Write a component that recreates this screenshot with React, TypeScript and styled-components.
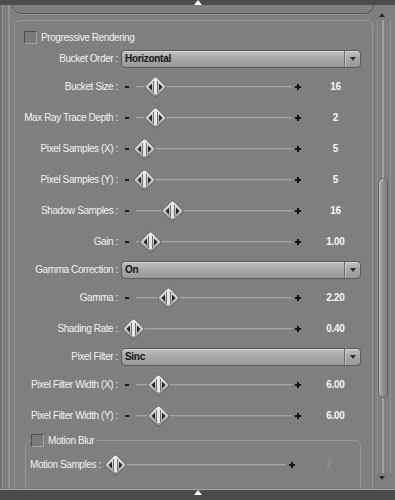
import React from "react";
import styled, { createGlobalStyle } from "styled-components";

const Global = createGlobalStyle`
  html, body { margin: 0; padding: 0; background: #7f7f7f; }
  body { font-family: "Liberation Sans", Arial, sans-serif; }
`;

const Root = styled.div`
  width: 395px;
  height: 500px;
  display: flex;
  flex-direction: column;
  overflow: hidden;
  background: #7f7f7f;
  font-family: "Liberation Sans", Arial, sans-serif;
  font-size: 10px;
  color: #f2f2f2;
`;

const EdgeBar = styled.div<{ $h: number; $top?: boolean }>`
  height: ${(p) => p.$h}px;
  flex-shrink: 0;
  background: #4b4b4b;
  display: flex;
  justify-content: center;
  align-items: flex-start;
  box-sizing: border-box;
  ${(p) => (p.$top ? "" : "border-top: 1px solid #a2a2a2;")}
`;

const UpMark = styled.span`
  width: 0;
  height: 0;
  border-left: 4px solid transparent;
  border-right: 4px solid transparent;
  border-bottom: 5px solid #ffffff;
`;

const Body = styled.div`
  flex: 1;
  min-height: 0;
  display: flex;
`;

const Main = styled.div`
  flex: 1;
  min-width: 0;
  display: flex;
  flex-direction: column;
  overflow: hidden;
  padding: 0 2px 0 14px;
  background: linear-gradient(
    to right,
    #727272 0 2px,
    #949494 2px 3px,
    transparent 3px 8px,
    #929292 8px 10px,
    transparent 10px
  );
`;

const Bracket = styled.div`
  flex-shrink: 0;
  height: 8px;
  margin: 0 -1px 0 -2px;
  border: 1px solid #525252;
  border-top: none;
  border-radius: 0 0 9px 9px;
  box-shadow: 0 1px 0 #959595;
`;

const Panel = styled.div`
  flex: 1;
  margin-top: 6px;
  border: 1px solid #979797;
  border-bottom: none;
  border-radius: 6px 6px 0 0;
  padding: 7px 5px 0 8px;
`;

const CheckRow = styled.label`
  height: 18px;
  display: flex;
  align-items: center;
  gap: 4px;
  padding-left: 1px;
  letter-spacing: -0.4px;
`;

const Box = styled.span`
  width: 13px;
  height: 13px;
  box-sizing: border-box;
  border: 1px solid;
  border-color: #4f4f4f #a3a3a3 #a3a3a3 #4f4f4f;
  background: #7a7a7a;
  flex-shrink: 0;
`;

const Row = styled.div<{ $cols: string; $h: number }>`
  display: grid;
  grid-template-columns: ${(p) => p.$cols};
  align-items: center;
  height: ${(p) => p.$h}px;
`;

const Label = styled.span<{ $left?: boolean }>`
  text-align: ${(p) => (p.$left ? "left" : "right")};
  padding-right: ${(p) => (p.$left ? 0 : 3)}px;
  white-space: nowrap;
  letter-spacing: -0.4px;
`;

const Value = styled.span<{ $off?: boolean }>`
  text-align: center;
  font-weight: bold;
  letter-spacing: -0.3px;
  color: ${(p) => (p.$off ? "#929292" : "#f6f6f6")};
`;

const Slider = styled.div`
  position: relative;
  height: 100%;
  display: flex;
  align-items: center;
`;

const Minus = styled.span`
  width: 4px;
  height: 2px;
  background: #1c1c1c;
  margin: 0 7px 0 4px;
  flex-shrink: 0;
`;

const Track = styled.div`
  flex: 1;
  height: 1px;
  background: #a6a6a6;
  box-shadow: 0 1px 0 #8b8b8b;
`;

const Plus = styled.span`
  position: relative;
  width: 6px;
  height: 6px;
  margin: 0 3px 0 3px;
  flex-shrink: 0;
  &::before,
  &::after {
    content: "";
    position: absolute;
    background: #141414;
  }
  &::before {
    left: 0;
    top: 2px;
    width: 6px;
    height: 2px;
  }
  &::after {
    left: 2px;
    top: 0;
    width: 2px;
    height: 6px;
  }
`;

const ThumbSvg = styled.svg`
  position: absolute;
  top: 50%;
  margin-top: -11px;
  width: 23px;
  height: 22px;
`;

const SelectBox = styled.div`
  height: 18px;
  box-sizing: border-box;
  margin-right: 6px;
  display: flex;
  align-items: stretch;
  border: 1px solid #5a5a5a;
  border-radius: 4px;
  background: linear-gradient(#c2c2c2, #a8a8a8 45%, #999999);
  box-shadow: inset 0 1px 0 #d6d6d6;
`;

const SelectText = styled.span`
  flex: 1;
  display: flex;
  align-items: center;
  padding-left: 3px;
  font-weight: bold;
  color: #151515;
  letter-spacing: -0.3px;
`;

const SelectArrow = styled.span`
  width: 16px;
  box-sizing: border-box;
  border-left: 1px solid #6b6b6b;
  box-shadow: inset 1px 0 0 #c6c6c6;
  display: flex;
  align-items: center;
  justify-content: center;
  &::after {
    content: "";
    width: 0;
    height: 0;
    border-left: 3.5px solid transparent;
    border-right: 3.5px solid transparent;
    border-top: 4px solid #2e2e2e;
  }
`;

const Group = styled.fieldset`
  margin: 0 6px 0 2px;
  padding: 0 0 12px 4px;
  border: 1px solid #989898;
  border-radius: 6px;
  min-width: 0;
`;

const Legend = styled.legend`
  padding: 0 3px 0 1px;
  height: 18px;
  display: flex;
  align-items: center;
  gap: 4px;
  letter-spacing: -0.4px;
`;

const Scroll = styled.div`
  width: 20px;
  flex-shrink: 0;
  display: flex;
  flex-direction: column;
  padding: 8px 0 9px;
  box-sizing: border-box;
`;

const ScrollArrow = styled.span<{ $down?: boolean }>`
  width: 0;
  height: 0;
  margin-left: 4px;
  border-left: 3.5px solid transparent;
  border-right: 3.5px solid transparent;
  ${(p) =>
    p.$down
      ? "border-top: 4px solid #2c2c2c;"
      : "border-bottom: 4px solid #2c2c2c;"}
`;

const ScrollTrack = styled.div`
  flex: 1;
  position: relative;
  margin: 3px 0;
  background: linear-gradient(
    to right,
    transparent 0 2px,
    #8e8e8e 2px 3px,
    transparent 3px 7px,
    #a2a2a2 7px 9px,
    transparent 9px 15px,
    #959595 15px 16px,
    transparent 16px
  );
`;

const ScrollThumb = styled.div`
  position: absolute;
  left: 3px;
  top: 158px;
  width: 10px;
  height: 220px;
  box-sizing: border-box;
  border: 1px solid #5c5c5c;
  border-radius: 5px;
  background: linear-gradient(to right, #a8a8a8, #8d8d8d 60%, #808080);
  box-shadow: inset 1px 1px 0 #bdbdbd;
`;

function Thumb({ left }: { left: number }) {
  return (
    <ThumbSvg viewBox="0 0 23 22" style={{ left }}>
      <defs>
        <linearGradient id="thg" x1="0" y1="0" x2="0" y2="1">
          <stop offset="0" stopColor="#f2f2f2" />
          <stop offset="0.5" stopColor="#c9c9c9" />
          <stop offset="1" stopColor="#8a8a8a" />
        </linearGradient>
      </defs>
      <path
        d="M11.5 1 Q12.5 1 13.5 2 L21.5 10 Q22.5 11 21.5 12 L13.5 20 Q12.5 21 11.5 21 Q10.5 21 9.5 20 L1.5 12 Q0.5 11 1.5 10 L9.5 2 Q10.5 1 11.5 1 Z"
        fill="url(#thg)"
        stroke="#5a5a5a"
        strokeWidth="1"
      />
      <rect x="10" y="4" width="3" height="14" fill="#e6e6e6" />
      <rect x="9" y="5" width="1" height="12" fill="#6f6f6f" />
      <rect x="13" y="5" width="1" height="12" fill="#6f6f6f" />
      <path d="M8 7.5 L4.5 11 L8 14.5 Z" fill="#262626" />
      <path d="M15 7.5 L18.5 11 L15 14.5 Z" fill="#262626" />
    </ThumbSvg>
  );
}

type Item =
  | { kind: "select"; label: string; value: string }
  | { kind: "slider"; label: string; value: string; pos: number };

const SLIDER_START = 121;

const items: Item[] = [
  { kind: "select", label: "Bucket Order :", value: "Horizontal" },
  { kind: "slider", label: "Bucket Size :", value: "16", pos: 155 },
  { kind: "slider", label: "Max Ray Trace Depth :", value: "2", pos: 155 },
  { kind: "slider", label: "Pixel Samples (X) :", value: "5", pos: 144.5 },
  { kind: "slider", label: "Pixel Samples (Y) :", value: "5", pos: 144.5 },
  { kind: "slider", label: "Shadow Samples :", value: "16", pos: 172 },
  { kind: "slider", label: "Gain :", value: "1.00", pos: 150 },
  { kind: "select", label: "Gamma Correction :", value: "On" },
  { kind: "slider", label: "Gamma :", value: "2.20", pos: 168 },
  { kind: "slider", label: "Shading Rate :", value: "0.40", pos: 133.5 },
  { kind: "select", label: "Pixel Filter :", value: "Sinc" },
  { kind: "slider", label: "Pixel Filter Width (X) :", value: "6.00", pos: 158.5 },
  { kind: "slider", label: "Pixel Filter Width (Y) :", value: "6.00", pos: 158.5 },
];

function SliderControl({ left }: { left: number }) {
  return (
    <Slider>
      <Minus />
      <Track />
      <Plus />
      <Thumb left={left} />
    </Slider>
  );
}

export default function App() {
  return (
    <Root>
      <Global />
      <EdgeBar $h={5} $top>
        <UpMark />
      </EdgeBar>
      <Body>
        <Main>
          <Bracket />
          <Panel>
            <CheckRow>
              <Box />
              <span>Progressive Rendering</span>
            </CheckRow>
            {items.map((it) =>
              it.kind === "select" ? (
                <Row key={it.label} $cols="98px 1fr" $h={25}>
                  <Label>{it.label}</Label>
                  <SelectBox>
                    <SelectText>{it.value}</SelectText>
                    <SelectArrow />
                  </SelectBox>
                </Row>
              ) : (
                <Row key={it.label} $cols="98px 183px 1fr" $h={31}>
                  <Label>{it.label}</Label>
                  <SliderControl left={it.pos - SLIDER_START - 11.5} />
                  <Value>{it.value}</Value>
                </Row>
              )
            )}
            <Group>
              <Legend>
                <Box />
                <span>Motion Blur</span>
              </Legend>
              <Row $cols="73px 195px 1fr" $h={31}>
                <Label $left>Motion Samples :</Label>
                <SliderControl left={1} />
                <Value $off>2</Value>
              </Row>
            </Group>
          </Panel>
        </Main>
        <Scroll>
          <ScrollArrow />
          <ScrollTrack>
            <ScrollThumb />
          </ScrollTrack>
          <ScrollArrow $down />
        </Scroll>
      </Body>
      <EdgeBar $h={11}>
        <UpMark />
      </EdgeBar>
    </Root>
  );
}
